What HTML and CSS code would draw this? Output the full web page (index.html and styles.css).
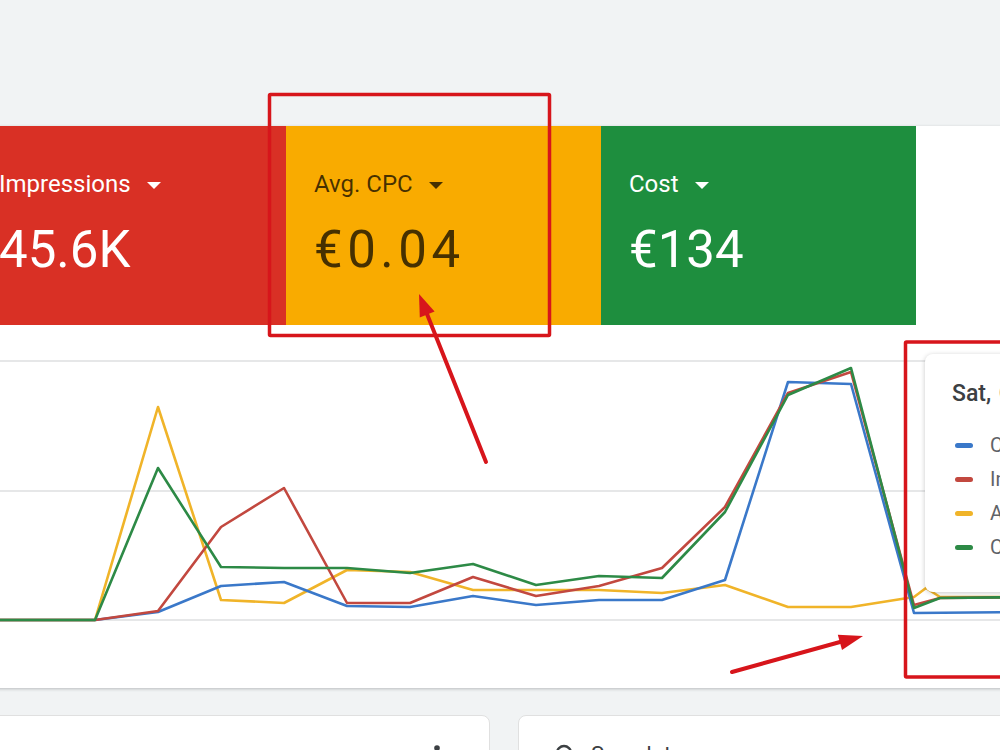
FILE: index.html
```html
<!DOCTYPE html>
<html lang="en">
<head>
  <meta charset="UTF-8">
  <meta name="viewport" content="width=device-width,initial-scale=1.0">
  <title>Campaign overview</title>
  <link rel="stylesheet" href="styles.css">
</head>
<body>
  <section class="overview">
    <div class="tiles">
      <div class="tile tile-impr">
        <div class="tile-label">Impressions <span class="caret"></span></div>
        <div class="tile-value">45.6K</div>
      </div>
      <div class="tile tile-cpc">
        <div class="tile-label">Avg. CPC <span class="caret"></span></div>
        <div class="tile-value">€0.04</div>
      </div>
      <div class="tile tile-cost">
        <div class="tile-label">Cost <span class="caret"></span></div>
        <div class="tile-value">€134</div>
      </div>
      <div class="tile tile-empty"></div>
    </div>

    <div class="chart">
      <!-- viewBox uses page coordinates so the series read like the report -->
      <svg width="1060" height="363" viewBox="-29 325 1060 363">
        <g class="grid">
          <line x1="-29" y1="361" x2="1031" y2="361"/>
          <line x1="-29" y1="491" x2="1031" y2="491"/>
          <line x1="-29" y1="620" x2="1031" y2="620"/>
        </g>
        <polyline class="s-cpc" points="-29,620 95,620 158,407 221,600 284,603 347,570 410,572 473,590 536,590 599,590 662,593 725,585 788,607 851,607 914,597 926,588 940,597 1031,597"/>
        <polyline class="s-clicks" points="-29,620 95,620 158,612 221,586 284,582 347,606 410,607 473,596 536,605 599,600 662,600 725,580 788,382 851,384 914,613 1031,612"/>
        <polyline class="s-impr" points="-29,620 95,620 158,611 221,527 284,488 347,603 410,603 473,577 536,596 599,586 662,568 725,507 788,393 851,372 914,605 940,598 1031,597"/>
        <polyline class="s-cost" points="-29,620 95,620 158,468 221,567 284,568 347,568 410,573 473,564 536,585 599,576 662,578 725,512 788,395 851,368 914,608 940,598 1031,597"/>
      </svg>
    </div>
  </section>

  <div class="cards">
    <div class="card card-left">
      <div class="card-head">
        <svg class="more" width="8" height="24" viewBox="0 0 8 24">
          <circle cx="4" cy="4" r="2.8"/>
          <circle cx="4" cy="12" r="2.8"/>
          <circle cx="4" cy="20" r="2.8"/>
        </svg>
      </div>
    </div>
    <div class="card card-right">
      <div class="card-head">
        <svg class="search" width="22" height="22" viewBox="0 0 22 22">
          <circle cx="9" cy="9" r="7"/>
          <line x1="14" y1="14" x2="20" y2="20"/>
        </svg>
        <span class="card-title">Search terms</span>
      </div>
    </div>
  </div>

  <div class="tooltip">
    <div class="tip-date">Sat, Oct 8, 2022</div>
    <div class="tip-row"><span class="tip-key k-clicks"></span>Clicks</div>
    <div class="tip-row"><span class="tip-key k-impr"></span>Impressions</div>
    <div class="tip-row"><span class="tip-key k-cpc"></span>Avg. CPC</div>
    <div class="tip-row"><span class="tip-key k-cost"></span>Cost</div>
  </div>

  <!-- red call-outs drawn over the report -->
  <svg class="marks" width="1000" height="750" viewBox="0 0 1000 750">
    <rect x="269.5" y="94.5" width="280" height="241" rx="1"/>
    <rect x="905.5" y="342" width="120" height="335" rx="1"/>
    <line x1="486" y1="462" x2="427" y2="314"/>
    <polygon points="419,294 434.6,311.4 419.8,317.4"/>
    <line x1="732" y1="672" x2="840" y2="642"/>
    <polygon points="863,636 842,650.1 837.8,634.7"/>
  </svg>
</body>
</html>
```

FILE: styles.css
```css
html, body { overflow:hidden; }
body { margin:0; background:#f1f3f4; font-family:Roboto,"Liberation Sans",Arial,sans-serif; width:1000px; height:750px; position:relative; }

.overview { margin:126px 0 0 -29px; width:1060px; background:#fff; box-shadow:0 1px 3px rgba(60,64,67,.3); }
.tiles { display:flex; height:199px; }
.tile { flex:0 0 315px; box-sizing:border-box; padding:44px 28px 0; color:#fff; }
.tile-impr { background:#d93025; }
.tile-cpc { background:#f9ab00; color:rgba(0,0,0,.72); }
.tile-cost { background:#1e8e3e; }
.tile-empty { flex:1; background:#fff; }
.tile-label { font-size:24px; line-height:28px; white-space:nowrap; }
.caret { display:inline-block; width:0; height:0; margin-left:10px; vertical-align:middle;
         border-left:7px solid transparent; border-right:7px solid transparent; border-top:7px solid currentColor; }
.tile-value { margin-top:22px; font-size:51px; line-height:60px; white-space:nowrap; }
.tile-cpc .tile-value { letter-spacing:4.5px; }

.chart { height:363px; }
.chart svg { display:block; }
.grid line { stroke:#e6e7e8; stroke-width:2; }
.chart polyline { fill:none; stroke-width:2.6; stroke-linejoin:round; stroke-linecap:round; }
.s-clicks { stroke:#3a78c9; }
.s-impr { stroke:#c2483f; }
.s-cpc { stroke:#f0b429; }
.s-cost { stroke:#2d8a46; }

.cards { display:flex; gap:28px; margin:27px 0 0 -29px; width:1100px; }
.card { height:200px; background:#fff; border:1px solid #e0e0e0; border-radius:8px; box-sizing:border-box; }
.card-left { flex:0 0 519px; }
.card-right { flex:1; }
.card-head { display:flex; align-items:center; gap:14px; padding:26px 48px 0 36px; font-size:22px; color:#3c4043; }
.card-left .card-head { justify-content:flex-end; padding-top:28px; }
.more { fill:#3c4043; }
.search { fill:none; stroke:#3c4043; stroke-width:2.4; }

.tooltip { position:absolute; left:925px; top:354px; width:260px; height:238px; box-sizing:border-box; padding:27px 0 0 27px;
           background:#fff; border-radius:8px; box-shadow:0 1px 5px rgba(0,0,0,.22); }
.tip-date { font-size:23px; line-height:26px; font-weight:500; color:#3c4043; white-space:nowrap; margin-bottom:21px; word-spacing:2px; }
.tip-row { display:flex; align-items:center; height:34px; font-size:20px; color:#5f6368; white-space:nowrap; }
.tip-key { width:18px; height:5px; border-radius:3px; margin:0 17px 0 3px; }
.k-clicks { background:#3a78c9; }
.k-impr { background:#c2483f; }
.k-cpc { background:#f0b429; }
.k-cost { background:#2d8a46; }

.marks { position:absolute; left:0; top:0; pointer-events:none; }
.marks rect { fill:none; stroke:#d7151b; stroke-width:3.5; }
.marks line { stroke:#d7151b; stroke-width:4; stroke-linecap:round; }
.marks polygon { fill:#d7151b; }
```
